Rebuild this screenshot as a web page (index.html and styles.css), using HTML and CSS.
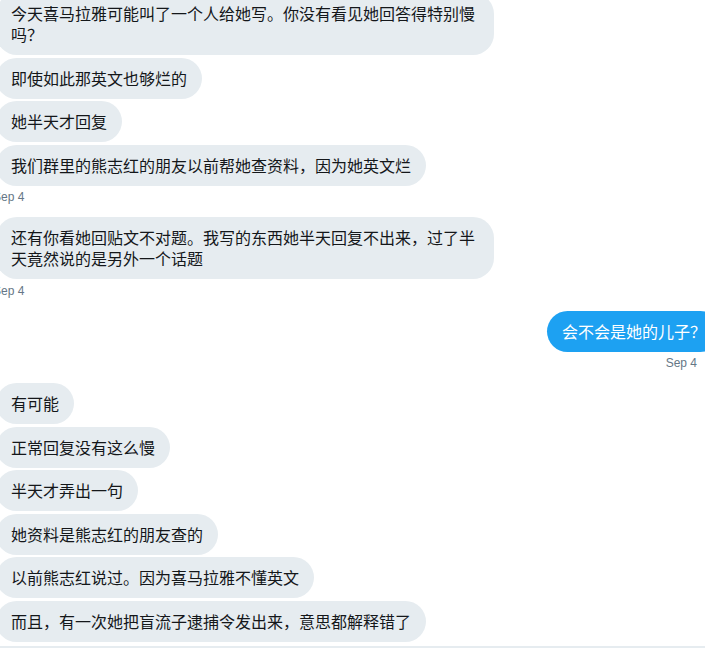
FILE: index.html
```html
<!DOCTYPE html>
<html lang="zh-CN">
<head>
    <meta charset="UTF-8">
    <meta name="viewport" content="width=device-width, initial-scale=1.0">
    <title>Direct Messages</title>
    <link rel="stylesheet" href="styles.css">
</head>
<body>

    <div class="thread">
        <div class="group received">
            <div class="bubble">今天喜马拉雅可能叫了一个人给她写。你没有看见她回答得特别慢吗？</div>
            <div class="bubble">即使如此那英文也够烂的</div>
            <div class="bubble">她半天才回复</div>
            <div class="bubble">我们群里的熊志红的朋友以前帮她查资料，因为她英文烂</div>
            <div class="time">Sep 4</div>
        </div>

        <div class="group received">
            <div class="bubble">还有你看她回贴文不对题。我写的东西她半天回复不出来，过了半天竟然说的是另外一个话题</div>
            <div class="time">Sep 4</div>
        </div>

        <div class="group sent">
            <div class="bubble">会不会是她的儿子？</div>
            <div class="time">Sep 4</div>
        </div>

        <div class="group received">
            <div class="bubble">有可能</div>
            <div class="bubble">正常回复没有这么慢</div>
            <div class="bubble">半天才弄出一句</div>
            <div class="bubble">她资料是熊志红的朋友查的</div>
            <div class="bubble">以前熊志红说过。因为喜马拉雅不懂英文</div>
            <div class="bubble">而且，有一次她把盲流子逮捕令发出来，意思都解释错了</div>
        </div>

        <div class="composer-line"></div>
    </div>

</body>
</html>
```

FILE: styles.css
```css
body {
    margin: 0;
    background-color: #ffffff;
    font-family: "Noto Sans CJK TC", "Noto Sans CJK SC", "Liberation Sans", sans-serif;
    overflow: hidden;
}
.thread {
    width: 725px;
    margin-top: -7px;
    margin-left: -4px;
}
.group {
    display: flex;
    flex-direction: column;
    gap: 2.5px;
    margin-bottom: 12px;
}
.received {
    align-items: flex-start;
}
.sent {
    align-items: flex-end;
}
.bubble {
    box-sizing: border-box;
    max-width: 498px;
    padding: 10px 15px;
    border-radius: 21px;
    font-size: 16px;
    line-height: 21px;
    background-color: #e6ecf0;
    color: #14171a;
}
.sent .bubble {
    background-color: #1da1f2;
    color: white;
}
.time {
    margin-top: 1px;
    font-family: "Liberation Sans", Arial, sans-serif;
    font-size: 12px;
    line-height: 16px;
    color: #657786;
}
.received .time {
    margin-left: -3px;
}
.sent .time {
    margin-right: 24px;
}
.composer-line {
    height: 2px;
    margin-top: -8px;
    background-color: #e6ecf0;
}
```
